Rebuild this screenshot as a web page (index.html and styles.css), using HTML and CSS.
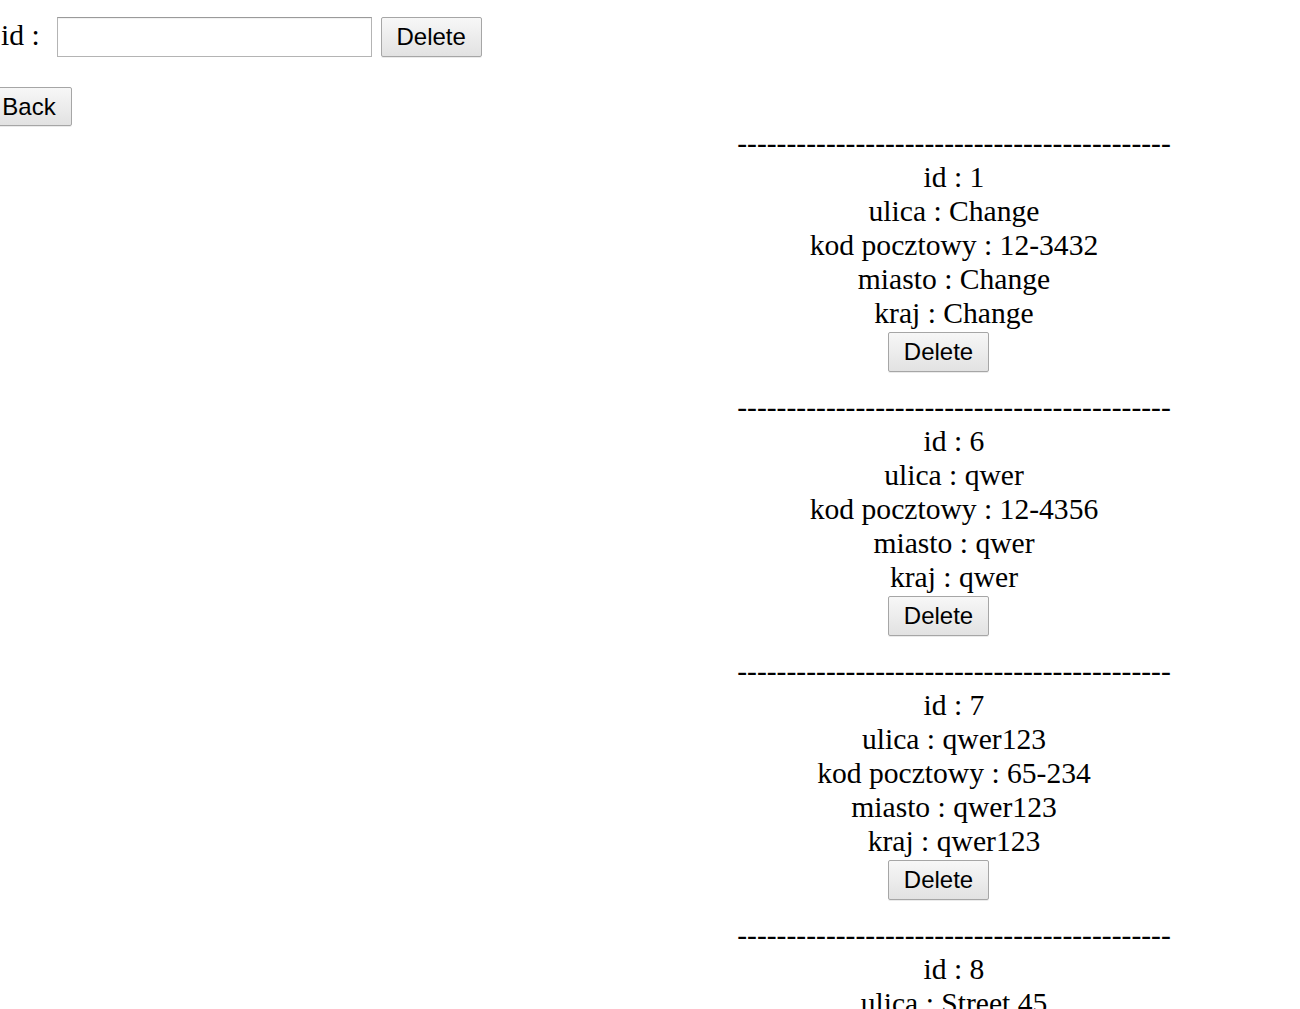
FILE: index.html
```html
<!DOCTYPE html>
<html>
<head>
<meta charset="utf-8">
<link rel="stylesheet" href="styles.css">
</head>
<body>
<form class="delete-form">
  <label class="label">id :</label>
  <input class="field" type="text">
  <button class="btn btn-wide" type="button">Delete</button>
</form>
<div class="back-row">
  <button class="btn btn-narrow" type="button">Back</button>
</div>
<div class="list">
  <div class="item">
    <div class="line">--------------------------------------------</div>
    <div class="line">id : 1</div>
    <div class="line">ulica : Change</div>
    <div class="line">kod pocztowy : 12-3432</div>
    <div class="line">miasto : Change</div>
    <div class="line">kraj : Change</div>
    <button class="btn btn-wide item-btn" type="button">Delete</button>
  </div>
  <div class="item">
    <div class="line">--------------------------------------------</div>
    <div class="line">id : 6</div>
    <div class="line">ulica : qwer</div>
    <div class="line">kod pocztowy : 12-4356</div>
    <div class="line">miasto : qwer</div>
    <div class="line">kraj : qwer</div>
    <button class="btn btn-wide item-btn" type="button">Delete</button>
  </div>
  <div class="item">
    <div class="line">--------------------------------------------</div>
    <div class="line">id : 7</div>
    <div class="line">ulica : qwer123</div>
    <div class="line">kod pocztowy : 65-234</div>
    <div class="line">miasto : qwer123</div>
    <div class="line">kraj : qwer123</div>
    <button class="btn btn-wide item-btn" type="button">Delete</button>
  </div>
  <div class="item">
    <div class="line">--------------------------------------------</div>
    <div class="line">id : 8</div>
    <div class="line">ulica : Street 45</div>
  </div>
</div>
</body>
</html>
```
FILE: styles.css
```css
html {
  overflow: hidden;
}
body {
  margin: 0;
  font-family: "Liberation Serif", "Times New Roman", serif;
  font-size: 29.6px;
  line-height: 34px;
  color: #000;
  background: #fff;
}
.delete-form {
  display: flex;
  align-items: flex-start;
  padding-top: 17px;
  margin: 0;
}
.label {
  margin-top: 1px;
  margin-left: 1px;
}
.field {
  box-sizing: border-box;
  width: 315px;
  height: 40px;
  margin: 0 0 0 17px;
  border: 1px solid #b4b4b4;
  border-top-color: #9a9a9a;
  box-shadow: inset 0 1px 1px rgba(0,0,0,0.06);
  background: #fff;
  padding: 0 4px;
  font-size: 24px;
}
.btn {
  box-sizing: border-box;
  height: 40px;
  font-family: "Liberation Sans", Arial, sans-serif;
  font-size: 24px;
  line-height: 28px;
  color: #000;
  background: linear-gradient(#f7f7f7, #e2e2e2);
  border: 1px solid #a6a6a6;
  border-radius: 2px;
  box-shadow: 0 1px 0 rgba(0,0,0,0.08);
  margin: 0;
}
.delete-form .btn {
  margin-left: 9px;
}
.btn-wide {
  width: 101px;
  padding: 0;
}
.btn-narrow {
  width: 86px;
  padding: 0;
  margin-left: -14px;
}
.back-row {
  margin-top: 30px;
  height: 39px;
}
.back-row .btn {
  height: 39px;
}
.list {
  margin-left: 737px;
  width: 434px;
}
.item {
  display: flex;
  flex-direction: column;
  align-items: center;
  text-align: center;
  padding-bottom: 18px;
}
.line {
  height: 34px;
  white-space: nowrap;
}
.item-btn {
  margin-top: 2px;
  margin-right: 31px;
}
```
